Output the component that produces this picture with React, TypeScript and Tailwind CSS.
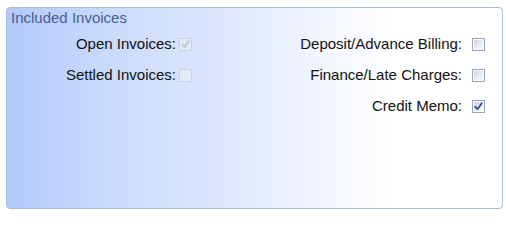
import type { ReactNode } from "react";

type BoxProps = { checked?: boolean; disabled?: boolean };

const CheckBox = ({ checked, disabled }: BoxProps) => (
  <div
    className={`relative w-[13px] h-[13px] shrink-0 border p-[1px] ${
      disabled ? "border-[#c9d2e2] bg-[#eef1f7]/60" : "border-[#93a7c4] bg-white"
    }`}
  >
    <div
      className={`w-full h-full ${
        disabled
          ? "bg-[#e3e8f2]/50"
          : "bg-[linear-gradient(135deg,#cdd2da_0%,#e8eaee_55%,#f7f7f7_100%)]"
      }`}
    />
    {checked && (
      <svg viewBox="0 0 13 13" className="absolute -left-px -top-px w-[13px] h-[13px]">
        <path
          d="M3.2 6.6 L5.4 9.2 L9.8 3.2"
          fill="none"
          stroke={disabled ? "#bcc4d2" : "#2e4a92"}
          strokeWidth="1.7"
          strokeLinecap="round"
          strokeLinejoin="round"
        />
      </svg>
    )}
  </div>
);

const Row = ({ label, children, gap }: { label: string; children: ReactNode; gap: string }) => (
  <div className={`h-[31px] flex items-center justify-end ${gap}`}>
    <span className="text-[15px] leading-[17px] text-[#111] -translate-y-px">{label}</span>
    {children}
  </div>
);

export default function App() {
  return (
    <div className="w-[506px] h-[217px] bg-white pl-[6px] pt-[7px] font-['Liberation_Sans',Arial,sans-serif]">
      <div className="w-[497px] h-[202px] rounded-[4px] border border-[#a9bcd7] bg-[linear-gradient(to_right,#b2cafa_0%,#c9dafc_20%,#dfe8fd_45%,#f4f7fe_65%,#ffffff_78%)] pl-[4px] pt-px">
        <div className="text-[15px] leading-[17px] text-[#4a5c98]">Included Invoices</div>
        <div className="flex mt-[3px] -ml-[4px]">
          <div className="w-[185px] flex flex-col">
            <Row label="Open Invoices:" gap="gap-[3px]">
              <CheckBox checked disabled />
            </Row>
            <Row label="Settled Invoices:" gap="gap-[3px]">
              <CheckBox disabled />
            </Row>
          </div>
          <div className="flex-1 flex flex-col pr-[17px]">
            <Row label="Deposit/Advance Billing:" gap="gap-[10px]">
              <CheckBox />
            </Row>
            <Row label="Finance/Late Charges:" gap="gap-[10px]">
              <CheckBox />
            </Row>
            <Row label="Credit Memo:" gap="gap-[10px]">
              <CheckBox checked />
            </Row>
          </div>
        </div>
      </div>
    </div>
  );
}
